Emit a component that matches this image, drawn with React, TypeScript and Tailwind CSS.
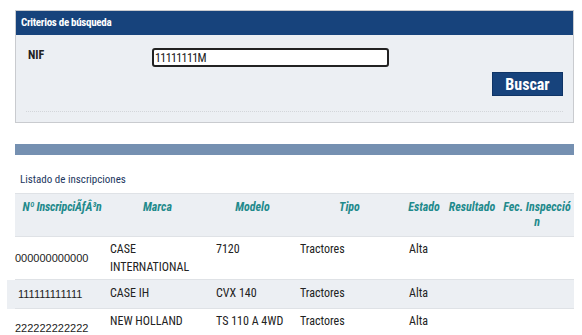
import React from "react";

const F = { fontFamily: '"Liberation Sans Narrow", "Roboto Condensed", Roboto, sans-serif' };
const A = { fontFamily: '"Liberation Sans", Arial, sans-serif' };

const rows = [
  { n: "000000000000", marca: "CASE INTERNATIONAL", modelo: "7120", tipo: "Tractores", estado: "Alta", tr: "bg-white", cell: "pt-[3px] pb-[3px]", num: "pl-0", td: "" },
  { n: "111111111111", marca: "CASE IH", modelo: "CVX 140", tipo: "Tractores", estado: "Alta", tr: "bg-[#eceff3]", cell: "pt-[4px] pb-[6px]", num: "pl-[3px]", td: "shadow-[-8px_0_0_#eceff3]" },
  { n: "222222222222", marca: "NEW HOLLAND", modelo: "TS 110 A 4WD", tipo: "Tractores", estado: "Alta", tr: "bg-white", cell: "pt-[3px] pb-[5px]", num: "pl-0 pt-[10px]", td: "" },
];

export default function App() {
  return (
    <div className="w-[582px] h-[335px] overflow-hidden bg-white pt-[10px] pl-[15px] pr-[8px]" style={F}>
      <div className="border border-[#c9cbcf] bg-[#eceff3]">
        <div className="h-[24px] bg-[#17437c] flex items-center px-[5px] text-white font-bold text-[11px] tracking-[-0.3px]">
          Criterios de búsqueda
        </div>
        <div className="px-[10px]">
          <div className="flex items-start pt-[13px]">
            <div className="w-[126px] font-bold text-[12px] text-[#222] pl-[2px] leading-[14px]">NIF</div>
            <input
              defaultValue="11111111M"
              className="w-[237px] h-[19px] border-2 border-[#222] rounded-[3px] bg-white px-[1px] text-[12px] tracking-[-0.6px] text-[#222] outline-none"
              style={F}
            />
          </div>
          <div className="flex justify-end pt-[5px]">
            <button className="w-[71px] h-[24px] bg-[#17437c] text-white font-bold text-[16px] border border-[#0f3466]" style={F}>
              Buscar
            </button>
          </div>
          <div className="mt-[15px] border-t border-dotted border-[#d3d6da]" />
          <div className="h-[10px]" />
        </div>
      </div>
      <div className="mt-[21px] h-[11px] bg-[#7590b1]" />
      <div className="pt-[18px] pl-[5px] text-[11px] text-[#1c3760] leading-[14px]">Listado de inscripciones</div>
      <table className="mt-[6px] table-fixed border-collapse w-[559px] text-[12px]">
        <colgroup>
          <col className="w-[90px]" />
          <col className="w-[105px]" />
          <col className="w-[85px]" />
          <col className="w-[109px]" />
          <col className="w-[40px]" />
          <col className="w-[56px]" />
          <col className="w-[74px]" />
        </colgroup>
        <thead>
          <tr className="bg-[#eceff3] border-t border-[#dfe2e6] h-[43px] text-[#1f8a8c] italic text-[12px] leading-[15px]">
            <th className="w-[90px] align-top pt-[6px] text-center pl-[4px] whitespace-nowrap font-bold tracking-[-0.2px]">Nº InscripciÃƒÂ³n</th>
            <th className="align-top pt-[6px] text-center font-bold">Marca</th>
            <th className="align-top pt-[6px] text-center font-bold">Modelo</th>
            <th className="align-top pt-[6px] text-center font-bold">Tipo</th>
            <th className="align-top pt-[6px] text-center font-bold">Estado</th>
            <th className="align-top pt-[6px] text-center font-bold">Resultado</th>
            <th className="align-top pt-[6px] text-center px-[3px] break-all font-bold">Fec. Inspección</th>
          </tr>
        </thead>
        <tbody className="text-[#222] leading-[18px]">
          {rows.map((r, i) => (
            <tr key={i} className={`border-t border-[#dfe2e6] ${r.tr}`}>
              <td className={`p-0 align-middle ${r.td}`}>
                <div className={`text-[11px] whitespace-nowrap ${r.num}`} style={A}>
                  {r.n}
                </div>
              </td>
              <td className={`align-top px-[5px] ${r.cell}`}>{r.marca}</td>
              <td className={`align-top px-[6px] ${r.cell}`}>{r.modelo}</td>
              <td className={`align-top px-[5px] ${r.cell}`}>{r.tipo}</td>
              <td className={`align-top px-[5px] ${r.cell}`}>{r.estado}</td>
              <td className={`align-top px-[5px] ${r.cell}`}></td>
              <td className={`align-top px-[5px] ${r.cell}`}></td>
            </tr>
          ))}
        </tbody>
      </table>
    </div>
  );
}
